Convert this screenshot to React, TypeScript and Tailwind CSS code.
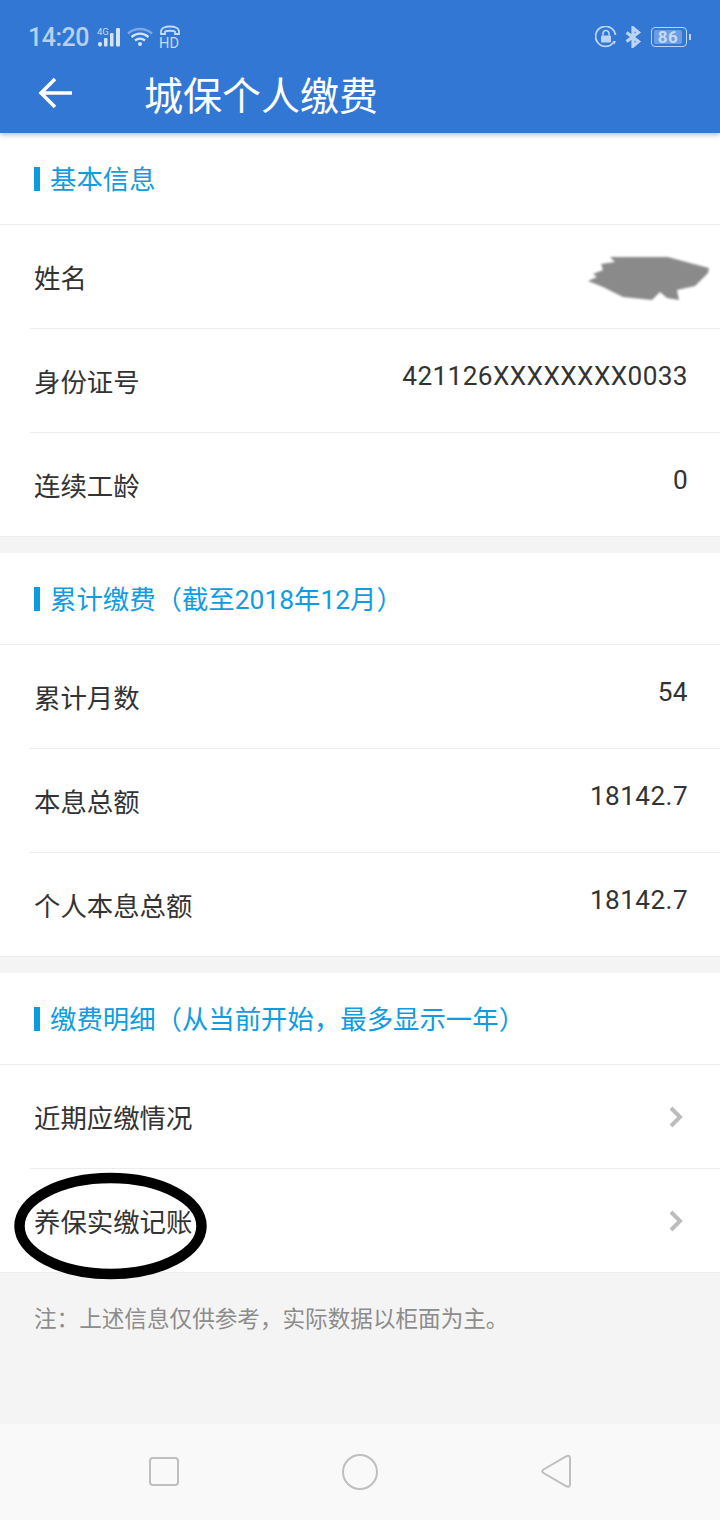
const font = { fontFamily: 'Roboto, "Noto Sans CJK SC", sans-serif' };

const Row = ({ label, value, last }: { label: string; value?: string; last?: boolean }) => (
  <div className="pl-[30px]">
    <div className={`flex pl-[4px] pr-[32px] justify-between ${last ? 'h-[103px]' : 'h-[104px] border-b border-[#ededed]'}`}>
      <div className="pt-[36px] text-[26.4px] leading-[36px] text-[#333333]">{label}</div>
      {value !== undefined ? (
        <div className="pt-[29px] text-[26.2px] leading-[36px] text-[#333333] tracking-[0.4px]">{value}</div>
      ) : (
        <svg width="16" height="22" viewBox="0 0 16 22" className="mt-[41px] mr-[4px]">
          <path d="M3 2l9 9-9 9" fill="none" stroke="#bdbdbd" strokeWidth="4" />
        </svg>
      )}
    </div>
  </div>
);

const SectionHead = ({ title }: { title: string }) => (
  <div className="flex items-center h-[92px] pl-[34px] border-b border-[#ededed]">
    <div className="w-[6px] h-[24px] bg-[#0a9be0]" />
    <div className="ml-[10px] mt-[2px] text-[26.4px] leading-[36px] text-[#0f9ce0]">{title}</div>
  </div>
);

const Divider = () => <div className="h-[17px] bg-[#f4f4f4] border-t border-[#ededed]" />;

export default function App() {
  return (
    <div style={font} className="relative w-[720px] h-[1520px] bg-white overflow-hidden flex flex-col">
      <header className="relative z-10 h-[133px] shrink-0 bg-[#3177d3] shadow-[0_2px_5px_rgba(0,0,0,0.25)]">
        <div className="flex justify-between items-center h-[50px] pt-[23px] pl-[28px] pr-[33px]">
          <div className="flex items-center text-[#b7d0f0]">
            <span className="w-[69px] mt-[3px] text-[25px] leading-[28px] font-medium tracking-[-0.5px]">14:20</span>
            <svg width="24" height="20" viewBox="0 0 24 20">
              <text x="0" y="8" fontSize="9.500" fill="#c6daf4" fontFamily="Roboto, sans-serif">4G</text>
              <rect x="1" y="15" width="4" height="4.500" rx="2" fill="#d5e3f7" />
              <rect x="7" y="11" width="3.500" height="8.500" rx="1" fill="#d5e3f7" />
              <rect x="13" y="6" width="3.500" height="13.500" rx="1" fill="#d5e3f7" />
              <rect x="19" y="1" width="4" height="18.500" rx="1" fill="#d5e3f7" />
            </svg>
            <svg width="26" height="20" viewBox="0 0 26 20" className="ml-[6px]">
              <path d="M1 6.500C8 0.500 18 0.500 25 6.500" fill="none" stroke="#7ea8e2" strokeWidth="2.400" />
              <path d="M4.500 10C9.500 5.500 16.500 5.500 21.500 10" fill="none" stroke="#d5e3f7" strokeWidth="2.400" />
              <path d="M8 13.500C11 11 15 11 18 13.500" fill="none" stroke="#d5e3f7" strokeWidth="2.400" />
              <circle cx="13" cy="17" r="2" fill="#d5e3f7" />
            </svg>
            <svg width="22" height="24" viewBox="0 0 22 24" className="ml-[6px] overflow-visible">
              <path d="M2 9V6.500C2 3 6 1.500 11 1.500S20 3 20 6.500V9h-4V6.500C14.500 5.500 7.500 5.500 6 6.500V9z" fill="none" stroke="#c6daf4" strokeWidth="1.800" />
              <text x="0" y="22.500" fontSize="15" fill="#c6daf4" fontFamily="Roboto, sans-serif" textLength="20" lengthAdjust="spacingAndGlyphs">HD</text>
            </svg>
          </div>
          <div className="flex items-center">
            <svg width="22" height="22" viewBox="0 0 22 22">
              <path d="M18.500 16.500A10 10 0 1 1 20.500 9" fill="none" stroke="#bcd3f2" strokeWidth="1.800" />
              <path d="M17.500 15l3.500 0-1.500 3.500z" fill="#bcd3f2" />
              <rect x="6" y="9.500" width="10" height="7" rx="1" fill="#bcd3f2" />
              <path d="M8 9.500V7.500a3 3 0 0 1 6 0v2" fill="none" stroke="#bcd3f2" strokeWidth="1.600" />
            </svg>
            <svg width="18" height="22" viewBox="0 0 18 24" className="ml-[7px]">
              <path d="M2 7l13 10-6 5V2l6 5L2 17" fill="none" stroke="#bcd3f2" strokeWidth="3.500" />
            </svg>
            <div className="ml-[9px] relative flex items-center justify-start w-[36px] h-[20px] rounded-[4px] border border-[#bcd3f2] p-[2px]">
              <div className="w-[28px] h-full rounded-[2px] bg-[#6d9ce0] flex items-center justify-center">
                <span className="text-[17px] leading-[16px] font-bold text-[#c6daf4] tracking-[0.5px]">86</span>
              </div>
              <div className="absolute right-[-5px] top-[6px] w-[2px] h-[6px] bg-[#bcd3f2]" />
            </div>
          </div>
        </div>
        <div className="flex items-center h-[83px] pt-[10px]">
          <svg width="36" height="32" viewBox="0 0 36 32" className="ml-[38px] mb-[7px]">
            <path d="M34 16H3M17 2L3 16l14 14" fill="none" stroke="#ffffff" strokeWidth="3.500" />
          </svg>
          <div className="ml-[70px] text-[39px] leading-[46px] text-white">城保个人缴费</div>
        </div>
      </header>

      <SectionHead title="基本信息" />
      <div className="relative">
        <Row label="姓名" value="" />
        {/* scribbled-out name */}
        <svg width="124" height="48" viewBox="0 0 124 48" className="absolute left-[588px] top-[30px] blur-[1px]">
          <path d="M22 2L80 2 102 8 121 13 120 18 107 31 89 35 91 45 79 43 72 37 64 45 35 42 15 32 0 26 9 22 5 19 15 15 13 9 27 7z" fill="#8a8a8a" />
        </svg>
        <Row label="身份证号" value="421126XXXXXXXX0033" />
        <Row label="连续工龄" value="0" last />
      </div>
      <Divider />
      <SectionHead title="累计缴费（截至2018年12月）" />
      <Row label="累计月数" value="54" />
      <Row label="本息总额" value="18142.7" />
      <Row label="个人本息总额" value="18142.7" last />
      <Divider />
      <SectionHead title="缴费明细（从当前开始，最多显示一年）" />
      <Row label="近期应缴情况" />
      <Row label="养保实缴记账" last />

      <div className="flex-1 bg-[#f4f4f4] border-t border-[#ededed] pl-[34px] pt-[31px] text-[22.6px] leading-[32px] text-[#8c8c8c]">
        注：上述信息仅供参考，实际数据以柜面为主。
      </div>

      <nav className="relative h-[96px] shrink-0 bg-[#f9f9f9]">
        <svg width="720" height="96" viewBox="0 0 720 96" className="block">
          <rect x="150" y="34" width="28" height="27" rx="3" fill="none" stroke="#bfbfbf" strokeWidth="2" />
          <circle cx="360" cy="48" r="17" fill="none" stroke="#bfbfbf" strokeWidth="2" />
          <path d="M543.500 45.500L566 32.500Q570 30.500 570 34.500V60Q570 64 566 62L543.500 49Q541 47 543.500 45.500z" fill="none" stroke="#bfbfbf" strokeWidth="2" />
        </svg>
      </nav>

      {/* hand-drawn circle over the last row */}
      <svg width="210" height="120" viewBox="0 0 210 120" className="absolute left-[8px] top-[1166px] pointer-events-none">
        <ellipse cx="102.500" cy="60" rx="91" ry="48" fill="none" stroke="#000000" strokeWidth="10.500" />
      </svg>
    </div>
  );
}
